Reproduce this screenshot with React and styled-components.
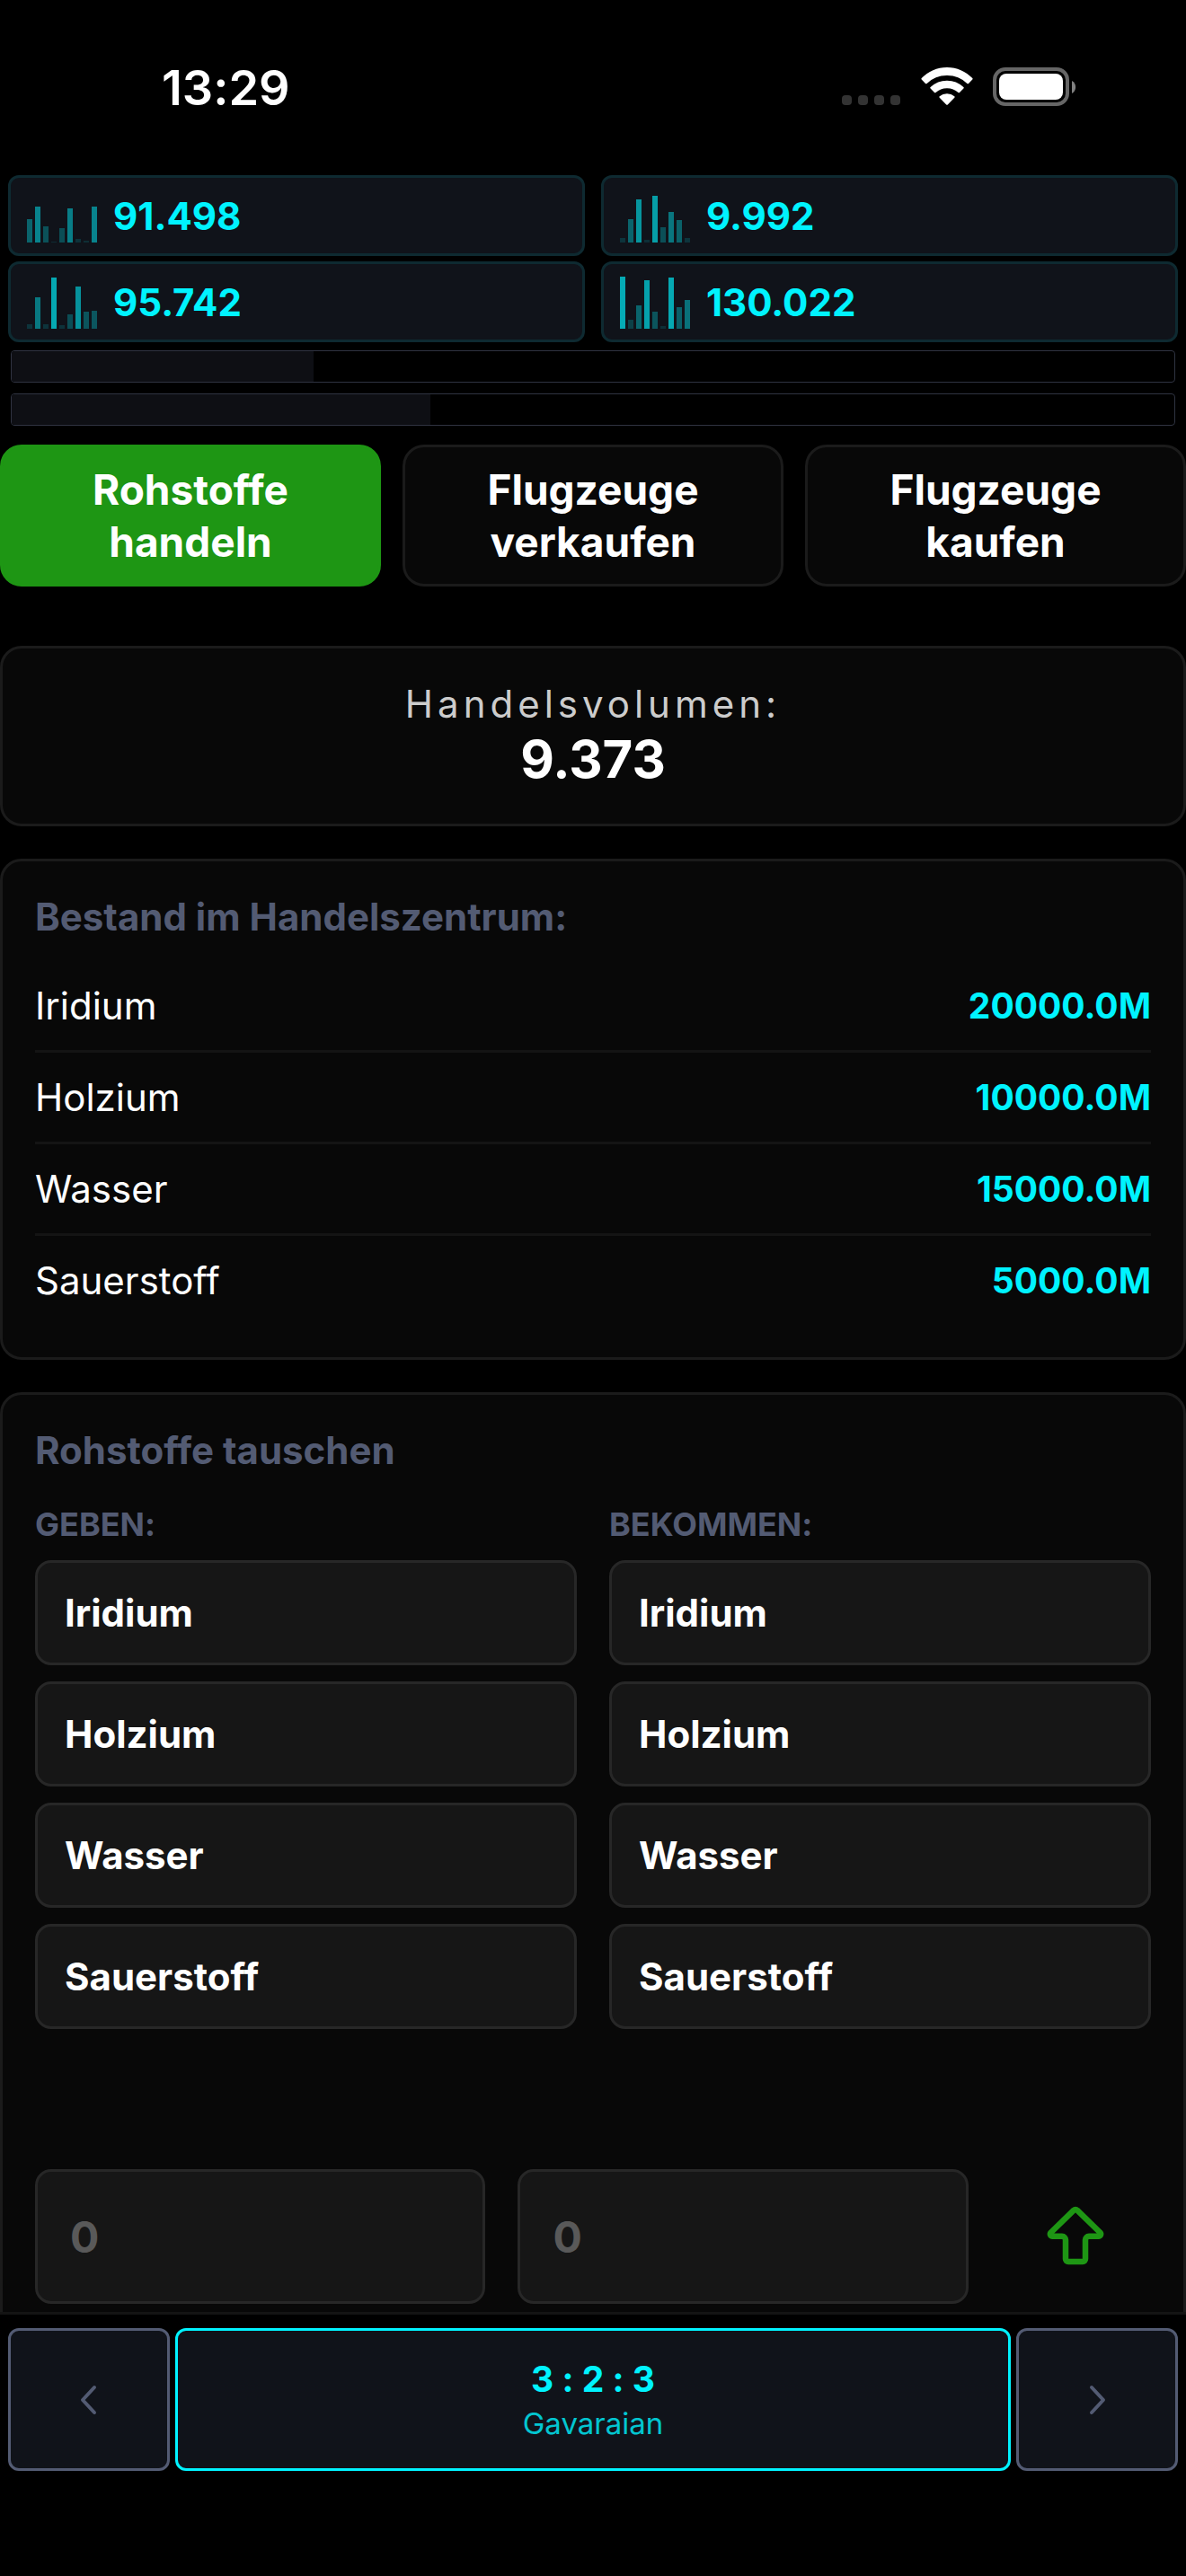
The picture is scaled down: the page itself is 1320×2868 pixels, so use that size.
import React, { useState } from "react";
import styled, { ThemeProvider, createGlobalStyle } from "styled-components";

const theme = {
  cyan: "#00f3ff",
  green: "#1e9614",
  slate: "#535b73",
  surface: "#10131a",
  panel: "#080808",
  panelBorder: "#1b1b1b",
  field: "#161616",
  fieldBorder: "#272727",
};

const GlobalStyles = createGlobalStyle`
  * {
    box-sizing: border-box;
  }
  body {
    margin: 0;
    background-color: #000;
    color: white;
    font-family: Inter, "Liberation Sans", sans-serif;
    font-size: 42px;
    line-height: 51px;
    font-variant-ligatures: none;
  }
  button,
  input {
    margin: 0;
    font-family: inherit;
    font-variant-ligatures: inherit;
    color: inherit;
  }
  button {
    cursor: pointer;
  }
`;

const AppStyles = styled.div`
  display: flex;
  flex-direction: column;
  height: 100vh;
`;

const StatusBarStyles = styled.header`
  display: flex;
  align-items: center;
  justify-content: space-between;
  padding: 67px 121px 66px 180px;
  .time {
    font-size: 54px;
    line-height: 62px;
    font-weight: 600;
  }
  .icons {
    display: flex;
    gap: 22px;
  }
  svg {
    display: block;
  }
`;

const ResourceGrid = styled.section`
  display: grid;
  grid-template-columns: 1fr 1fr;
  gap: 6px 18px;
  padding: 0 9px;
`;

const ResourceCard = styled.div`
  display: flex;
  align-items: center;
  gap: 18px;
  padding: 12px 18px;
  border: 3px solid #0e2a31;
  border-radius: 12px;
  background-color: ${(props) => props.theme.surface};
  color: ${(props) => props.theme.cyan};
  font-weight: 700;
`;

const BarChart = styled.div`
  display: flex;
  align-items: flex-end;
  gap: 3px;
  height: 60px;
  span {
    width: 6px;
    background-color: ${(props) => props.theme.cyan};
  }
`;

const ProgressList = styled.div`
  display: flex;
  flex-direction: column;
  gap: 12px;
  padding: 9px 12px 0;
`;

const ProgressTrack = styled.div`
  height: 36px;
  border: 1px solid #2f3341;
  border-radius: 4px;
  overflow: hidden;
  div {
    height: 100%;
    background-color: #0e0f14;
  }
`;

const ScrollArea = styled.main`
  flex: 1;
  min-height: 0;
  margin-top: 21px;
  overflow-y: auto;
  scrollbar-width: none;
`;

const TabList = styled.nav`
  display: grid;
  grid-template-columns: repeat(3, 1fr);
  gap: 24px;
  margin-bottom: 66px;
`;

const TabButton = styled.button`
  padding: 18px 24px;
  border: 3px solid
    ${(props) => (props.$active ? props.theme.green : props.theme.panelBorder)};
  border-radius: 24px;
  background-color: ${(props) =>
    props.$active ? props.theme.green : props.theme.panel};
  font-size: 46px;
  line-height: 58px;
  font-weight: 700;
`;

const Panel = styled.section`
  margin-bottom: 36px;
  padding: 36px;
  border: 3px solid ${(props) => props.theme.panelBorder};
  border-radius: 24px;
  background-color: ${(props) => props.theme.panel};
`;

const PanelTitle = styled.h2`
  margin: 0 0 ${(props) => props.$space || 24}px;
  color: ${(props) => props.theme.slate};
  font-size: 42px;
  line-height: 51px;
  font-weight: 700;
`;

const VolumePanel = styled(Panel)`
  text-align: center;
  .label {
    color: #ccc;
    font-weight: 400;
    letter-spacing: 5px;
  }
  .value {
    font-size: 58px;
    line-height: 72px;
    font-weight: 700;
  }
`;

const StockTable = styled.table`
  width: 100%;
  border-collapse: separate;
  border-spacing: 0;
  th,
  td {
    padding: 24px 0;
    border-bottom: 3px solid #141414;
  }
  tr:last-child th,
  tr:last-child td {
    border-bottom: none;
  }
  th {
    font-weight: 400;
    text-align: left;
  }
  td {
    color: ${(props) => props.theme.cyan};
    font-size: 39px;
    font-weight: 700;
    text-align: right;
  }
`;

const TradeColumns = styled.div`
  display: grid;
  grid-template-columns: 1fr 1fr;
  gap: 36px;
  margin-bottom: 156px;
`;

const TradeColumn = styled.div`
  display: flex;
  flex-direction: column;
  gap: 18px;
  h3 {
    margin: 0;
    color: ${(props) => props.theme.slate};
    font-size: 36px;
    line-height: 43px;
    font-weight: 700;
    text-transform: uppercase;
  }
`;

const OptionButton = styled.button`
  padding: 30px;
  border: 3px solid ${(props) => props.theme.fieldBorder};
  border-radius: 18px;
  background-color: ${(props) => props.theme.field};
  font-size: 42px;
  line-height: 51px;
  font-weight: 700;
  text-align: left;
`;

const AmountRow = styled.form`
  display: grid;
  grid-template-columns: 3fr 3fr 1fr;
  gap: 36px;
`;

const AmountInput = styled.input`
  min-width: 0;
  height: 150px;
  padding: 0 36px;
  border: 3px solid ${(props) => props.theme.fieldBorder};
  border-radius: 18px;
  background-color: ${(props) => props.theme.field};
  font-size: 48px;
  font-weight: 700;
  &::placeholder {
    color: #595959;
    opacity: 1;
  }
`;

const SubmitButton = styled.button`
  display: flex;
  align-items: center;
  justify-content: center;
  padding: 0;
  border: none;
  background: none;
  color: ${(props) => props.theme.green};
`;

const PlanetNav = styled.nav`
  display: grid;
  grid-template-columns: 180px 1fr 180px;
  gap: 6px;
  padding: 15px 9px 117px;
  border-top: 3px solid #141414;
`;

const PlanetButton = styled.button`
  display: flex;
  flex-direction: column;
  align-items: center;
  justify-content: center;
  min-height: 159px;
  padding: 0;
  border: 3px solid
    ${(props) => (props.$current ? props.theme.cyan : props.theme.slate)};
  border-radius: 12px;
  background-color: ${(props) => props.theme.surface};
  color: ${(props) => (props.$current ? props.theme.cyan : props.theme.slate)};
  .coords {
    font-size: 39px;
    line-height: 53px;
    font-weight: 700;
  }
  .name {
    font-size: 33px;
    line-height: 46px;
    font-weight: 400;
    opacity: 0.8;
  }
`;

const resources = [
  { value: "91.498", bars: [26, 40, 18, 1, 16, 38, 4, 2, 40] },
  { value: "9.992", bars: [5, 26, 48, 3, 52, 17, 34, 25, 5] },
  { value: "95.742", bars: [5, 35, 5, 57, 4, 16, 47, 19, 20] },
  { value: "130.022", bars: [58, 10, 26, 54, 19, 3, 57, 24, 32] },
];

const progress = [26, 36];

const tabs = ["Rohstoffe handeln", "Flugzeuge verkaufen", "Flugzeuge kaufen"];

const stock = [
  { name: "Iridium", amount: "20000.0M" },
  { name: "Holzium", amount: "10000.0M" },
  { name: "Wasser", amount: "15000.0M" },
  { name: "Sauerstoff", amount: "5000.0M" },
];

const SignalIcon = () => (
  <svg width="66" height="46" viewBox="0 0 66 46" fill="#333">
    {[0, 18, 36, 54].map((x) => (
      <rect key={x} x={x} y="31" width="11" height="11" rx="4" />
    ))}
  </svg>
);

const WifiIcon = () => (
  <svg width="58" height="46" viewBox="0 0 58 46" fill="white">
    <path d="M29 0C18 0 8 4.600 0.700 12.100a1 1 0 0 0 0 1.400l4.300 4.400a1.100 1.100 0 0 0 1.600 0A32 32 0 0 1 29 9a32 32 0 0 1 22.400 8.900a1.100 1.100 0 0 0 1.600 0l4.300-4.400a1 1 0 0 0 0-1.400C50 4.600 40 0 29 0z" />
    <path d="M29 14.800A27 27 0 0 0 10.600 22.100a1 1 0 0 0 0 1.500l4.400 4.400a1.100 1.100 0 0 0 1.500 0A18.500 18.500 0 0 1 29 23.300a18.500 18.500 0 0 1 12.500 4.700a1.100 1.100 0 0 0 1.500 0l4.400-4.400a1 1 0 0 0 0-1.500A27 27 0 0 0 29 14.800z" />
    <path d="M29 29.200a13 13 0 0 0-8.300 3.100a1 1 0 0 0 0 1.500l7.500 7.600a1.100 1.100 0 0 0 1.600 0l7.500-7.600a1 1 0 0 0 0-1.500A13 13 0 0 0 29 29.200z" />
  </svg>
);

const BatteryIcon = () => (
  <svg width="94" height="46" viewBox="0 0 94 46">
    <rect
      x="2"
      y="2"
      width="81"
      height="39"
      rx="12"
      fill="none"
      stroke="#666"
      strokeWidth="4"
    />
    <rect x="7" y="7" width="71" height="29" rx="8" fill="white" />
    <path d="M88 15a8 8 0 0 1 0 14z" fill="#808080" />
  </svg>
);

const ArrowUpIcon = () => (
  <svg
    width="66"
    height="68"
    viewBox="0 0 66 68"
    fill="none"
    stroke="currentColor"
    strokeWidth="6.500"
    strokeLinejoin="round"
    aria-hidden="true"
  >
    <path d="M31.200 4.700a2.500 2.500 0 0 1 3.600 0L60.300 29.500c1.700 1.900 0.700 4.300-1.800 4.300H48a4 4 0 0 0-4 4V59a3 3 0 0 1-3 3H25a3 3 0 0 1-3-3V37.800a4 4 0 0 0-4-4H7.500c-2.500 0-3.500-2.400-1.800-4.300z" />
  </svg>
);

const ChevronIcon = ({ points }) => (
  <svg
    width="24"
    height="36"
    viewBox="0 0 24 36"
    fill="none"
    stroke="currentColor"
    strokeWidth="4"
    strokeLinecap="round"
    strokeLinejoin="round"
    aria-hidden="true"
  >
    <polyline points={points} />
  </svg>
);

const StatusBar = () => {
  return (
    <StatusBarStyles>
      <span className="time">13:29</span>
      <div className="icons">
        <SignalIcon />
        <WifiIcon />
        <BatteryIcon />
      </div>
    </StatusBarStyles>
  );
};

const Resource = ({ value, bars }) => {
  return (
    <ResourceCard>
      <BarChart>
        {bars.map((height, index) => (
          <span
            key={index}
            style={{ height, opacity: 0.1 + (height / 60) * 0.6 }}
          />
        ))}
      </BarChart>
      <span>{value}</span>
    </ResourceCard>
  );
};

const ResourceOptions = ({ title }) => {
  return (
    <TradeColumn>
      <h3>{title}</h3>
      {stock.map((item) => (
        <OptionButton type="button" key={item.name}>
          {item.name}
        </OptionButton>
      ))}
    </TradeColumn>
  );
};

const App = () => {
  const [activeTab, setActiveTab] = useState(tabs[0]);
  const [give, setGive] = useState("");
  const [receive, setReceive] = useState("");

  return (
    <ThemeProvider theme={theme}>
      <GlobalStyles />
      <AppStyles>
        <StatusBar />
        <ResourceGrid>
          {resources.map((item) => (
            <Resource key={item.value} {...item} />
          ))}
        </ResourceGrid>
        <ProgressList>
          {progress.map((percent) => (
            <ProgressTrack key={percent}>
              <div style={{ width: `${percent}%` }} />
            </ProgressTrack>
          ))}
        </ProgressList>
        <ScrollArea>
          <TabList>
            {tabs.map((tab) => (
              <TabButton
                type="button"
                key={tab}
                $active={tab === activeTab}
                onClick={() => setActiveTab(tab)}
              >
                {tab}
              </TabButton>
            ))}
          </TabList>
          <VolumePanel>
            <div className="label">Handelsvolumen:</div>
            <div className="value">9.373</div>
          </VolumePanel>
          <Panel>
            <PanelTitle>Bestand im Handelszentrum:</PanelTitle>
            <StockTable>
              <tbody>
                {stock.map((item) => (
                  <tr key={item.name}>
                    <th scope="row">{item.name}</th>
                    <td>{item.amount}</td>
                  </tr>
                ))}
              </tbody>
            </StockTable>
          </Panel>
          <Panel>
            <PanelTitle $space={36}>Rohstoffe tauschen</PanelTitle>
            <TradeColumns>
              <ResourceOptions title="Geben:" />
              <ResourceOptions title="Bekommen:" />
            </TradeColumns>
            <AmountRow onSubmit={(e) => e.preventDefault()}>
              <AmountInput
                aria-label="Geben"
                inputMode="numeric"
                placeholder="0"
                value={give}
                onChange={(e) => setGive(e.target.value)}
              />
              <AmountInput
                aria-label="Bekommen"
                inputMode="numeric"
                placeholder="0"
                value={receive}
                onChange={(e) => setReceive(e.target.value)}
              />
              <SubmitButton type="submit" aria-label="Tauschen">
                <ArrowUpIcon />
              </SubmitButton>
            </AmountRow>
          </Panel>
        </ScrollArea>
        <PlanetNav>
          <PlanetButton type="button" aria-label="Zurück">
            <ChevronIcon points="18,4 5,18 18,32" />
          </PlanetButton>
          <PlanetButton type="button" $current>
            <span className="coords">3 : 2 : 3</span>
            <span className="name">Gavaraian</span>
          </PlanetButton>
          <PlanetButton type="button" aria-label="Weiter">
            <ChevronIcon points="6,4 19,18 6,32" />
          </PlanetButton>
        </PlanetNav>
      </AppStyles>
    </ThemeProvider>
  );
};

export default App;
